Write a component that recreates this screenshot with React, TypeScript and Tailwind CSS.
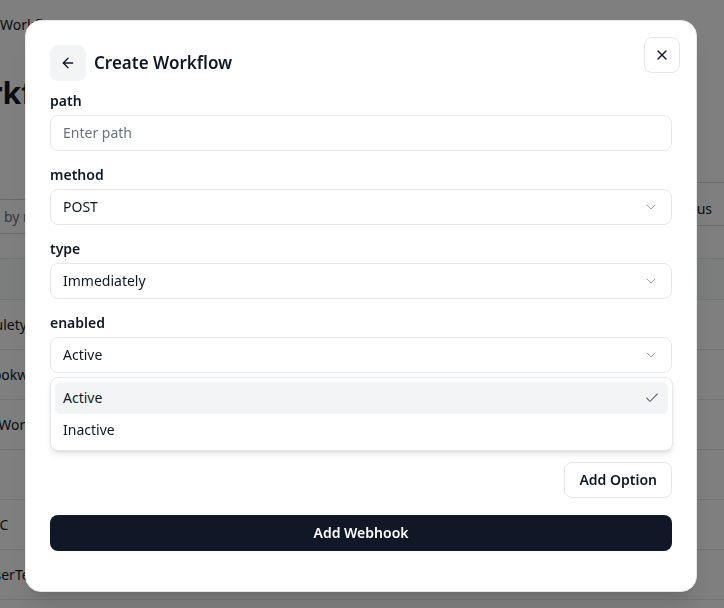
import { ArrowLeft, Check, ChevronDown, X } from 'lucide-react';

const rows = ['Scheduletype', 'Webhookwork', 'Demo Workflow', '', 'TestABC', 'NewUserTest'];

function Page() {
  return (
    <div className="w-full">
      <div className="pt-[15px] text-sm leading-5 text-gray-900">Workflows</div>
      <h1 className="-ml-[58px] mt-[40px] text-3xl font-bold leading-9 text-gray-900">Workflows</h1>

      <div className="mt-[71px] flex items-start justify-between">
        <div className="-ml-[57px] mt-[17px] flex h-[35px] w-[300px] items-center rounded-md border border-gray-300 px-3 text-sm text-gray-500">
          Search by name
        </div>
        <div className="-mr-[40px] flex h-[44px] w-[106px] items-center rounded-md border border-gray-300 px-3 pt-[10px] text-sm text-gray-900">
          Status
        </div>
      </div>

      <div className="mt-[24px] w-full">
        <div className="h-[42px] border-y border-gray-200 bg-gray-50" />
        {rows.map((name, i) => (
          <div key={i} className="flex h-[50px] items-center border-b border-gray-200">
            <span className="-ml-[45px] text-sm whitespace-nowrap text-gray-900">{name}</span>
          </div>
        ))}
      </div>
    </div>
  );
}

function Field({ label, children }: { label: string; children: React.ReactNode }) {
  return (
    <div className="relative">
      <label className="block h-5 text-sm font-semibold leading-5 text-gray-900">{label}</label>
      <div className="mt-1">{children}</div>
    </div>
  );
}

function Select({ value }: { value: string }) {
  return (
    <div className="flex h-9 w-full items-center justify-between rounded-lg border border-gray-200 bg-white px-3 text-sm text-gray-900">
      <span>{value}</span>
      <ChevronDown size={16} className="text-gray-400" strokeWidth={1.5} />
    </div>
  );
}

export default function App() {
  return (
    <div className="relative min-h-[608px] w-full overflow-hidden bg-white font-['Noto_Sans',sans-serif]">
      <Page />

      <div className="fixed inset-0 bg-black/50" />

      <div className="fixed inset-0 flex pl-[25px] pt-5">
        <div className="relative h-fit w-[672px] rounded-2xl border border-gray-200 bg-white p-6 shadow-xl">
          <button className="absolute right-4 top-4 flex h-9 w-9 items-center justify-center rounded-lg border border-gray-200 bg-white text-gray-900">
            <X size={16} strokeWidth={2} />
          </button>

          <div className="flex items-center gap-2">
            <button className="flex h-9 w-9 items-center justify-center rounded-lg bg-gray-100 text-gray-900">
              <ArrowLeft size={16} strokeWidth={2} />
            </button>
            <h2 className="-mt-px text-[17px] font-semibold text-gray-900">Create Workflow</h2>
          </div>

          <div className="mt-[10px] flex flex-col gap-[14px]">
            <Field label="path">
              <div className="flex h-9 w-full items-center rounded-lg border border-gray-200 px-3 text-sm text-gray-500">
                Enter path
              </div>
            </Field>
            <Field label="method">
              <Select value="POST" />
            </Field>
            <Field label="type">
              <Select value="Immediately" />
            </Field>
            <Field label="enabled">
              <Select value="Active" />
              <div className="absolute left-0 right-[-1px] top-full z-10 mt-1 rounded-lg border border-gray-200 bg-white p-1 shadow-md">
                <div className="flex h-8 items-center justify-between rounded-md bg-gray-100 px-2 text-sm text-gray-900">
                  <span>Active</span>
                  <Check size={16} strokeWidth={1.75} className="text-gray-500" />
                </div>
                <div className="flex h-8 items-center px-2 text-sm text-gray-900">Inactive</div>
              </div>
            </Field>
          </div>

          <div className="mt-[89px] flex justify-end">
            <button className="h-9 rounded-lg border border-gray-200 bg-white px-[14px] text-sm font-semibold text-gray-900">
              Add Option
            </button>
          </div>

          <button className="mb-[16px] mt-[17px] h-9 w-full rounded-lg bg-gray-900 text-sm font-semibold text-white">
            Add Webhook
          </button>
        </div>
      </div>
    </div>
  );
}
